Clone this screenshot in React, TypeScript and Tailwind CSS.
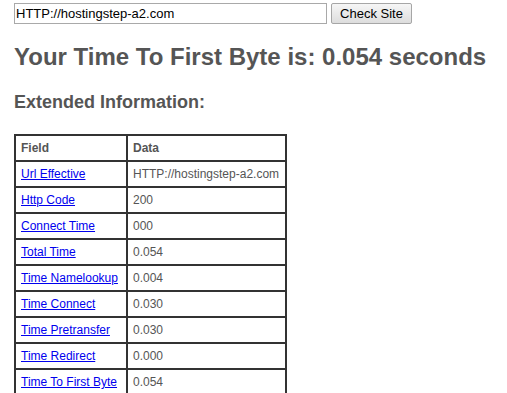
import React from 'react';

const rows: [string, string][] = [
  ['Url Effective', 'HTTP://hostingstep-a2.com'],
  ['Http Code', '200'],
  ['Connect Time', '000'],
  ['Total Time', '0.054'],
  ['Time Namelookup', '0.004'],
  ['Time Connect', '0.030'],
  ['Time Pretransfer', '0.030'],
  ['Time Redirect', '0.000'],
  ['Time To First Byte', '0.054'],
];

const App: React.FC = () => {
  return (
    <div className="min-h-screen bg-white pl-[14px] pt-[3px] text-[#555] font-['Liberation_Sans',Arial,sans-serif]">
      {/* url form */}
      <div className="flex items-start gap-[4px]">
        <input
          defaultValue="HTTP://hostingstep-a2.com"
          className="h-[21px] w-[313px] border border-[#a9a9a9] px-[1px] text-[13px] text-black outline-none"
        />
        <button className="h-[21px] w-[81px] rounded-[2px] border border-[#a6a6a6] bg-gradient-to-b from-[#f6f6f6] to-[#dddddd] text-[13px] text-black">
          Check Site
        </button>
      </div>

      <h1 className="mt-[19px] text-[24px] font-bold leading-[28px]">
        Your Time To First Byte is: 0.054 seconds
      </h1>

      <h2 className="mt-[20px] text-[18px] font-bold leading-[22px]">Extended Information:</h2>

      <table className="mt-[21px] border-collapse border-2 border-[#333] text-[12px]">
        <thead>
          <tr className="h-[26px]">
            <th className="w-[112px] border-2 border-[#333] px-[5px] text-left font-bold">Field</th>
            <th className="w-[159px] border-2 border-[#333] px-[5px] text-left font-bold">Data</th>
          </tr>
        </thead>
        <tbody>
          {rows.map(([field, value]) => (
            <tr key={field} className="h-[26px]">
              <td className="border-2 border-[#333] px-[5px] whitespace-nowrap">
                <a href="#" className="text-[#0000ee] underline">
                  {field}
                </a>
              </td>
              <td className="border-2 border-[#333] px-[5px] whitespace-nowrap">{value}</td>
            </tr>
          ))}
        </tbody>
      </table>
    </div>
  );
};

export default App;
